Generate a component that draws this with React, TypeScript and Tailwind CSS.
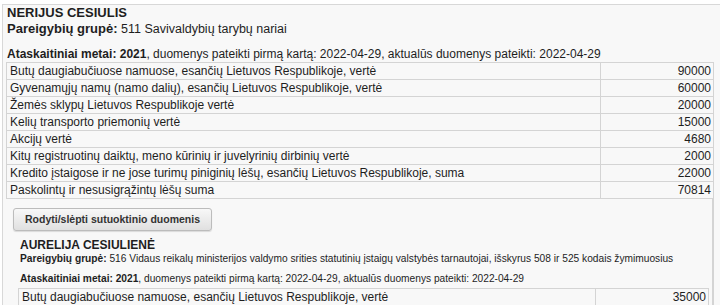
const rows: [string, string][] = [
  ["Butų daugiabučiuose namuose, esančių Lietuvos Respublikoje, vertė", "90000"],
  ["Gyvenamųjų namų (namo dalių), esančių Lietuvos Respublikoje, vertė", "60000"],
  ["Žemės sklypų Lietuvos Respublikoje vertė", "20000"],
  ["Kelių transporto priemonių vertė", "15000"],
  ["Akcijų vertė", "4680"],
  ["Kitų registruotinų daiktų, meno kūrinių ir juvelyrinių dirbinių vertė", "2000"],
  ["Kredito įstaigose ir ne jose turimų piniginių lėšų, esančių Lietuvos Respublikoje, suma", "22000"],
  ["Paskolintų ir nesusigrąžintų lėšų suma", "70814"],
];

const spouseRows: [string, string][] = [
  ["Butų daugiabučiuose namuose, esančių Lietuvos Respublikoje, vertė", "35000"],
];

const AssetTable = ({ data }: { data: [string, string][] }) => (
  <table className="w-full border-collapse text-[12px] leading-[16px]">
    <tbody>
      {data.map(([label, value]) => (
        <tr key={label} className="h-[17px]">
          <td className="border border-[#d4d4d4] py-0 pl-[3px] pr-[3px]">{label}</td>
          <td className="w-[113px] border border-[#d4d4d4] py-0 pl-[3px] pr-[2px] text-right">{value}</td>
        </tr>
      ))}
    </tbody>
  </table>
);

export default function App() {
  return (
    <div className="h-[305px] overflow-hidden bg-white pl-[2px] pt-[4px] font-['Liberation_Sans',Arial,sans-serif] text-[#1e1e1e]">
      <div className="h-full border-l border-t border-[#d8d8d8] bg-[#f8f8f8] pl-[3px]">
        <div className="w-[708px]">
          {/* Declarant */}
          <div className="pl-[1px]">
            <div className="text-[13px] font-bold leading-[16px]">NERIJUS CESIULIS</div>
            <div className="text-[12.5px] leading-[16px]">
              <b className="text-[13px]">Pareigybių grupė:</b> 511 Savivaldybių tarybų nariai
            </div>
            <div className="mt-[9px] text-[12px] leading-[16px]">
              <b>Ataskaitiniai metai: 2021</b>, duomenys pateikti pirmą kartą: 2022-04-29, aktualūs duomenys
              pateikti: 2022-04-29
            </div>
          </div>
          <AssetTable data={rows} />

          {/* Spouse */}
          <div className="border-r-2 border-[#d4d4d4] pb-[10px] pl-[12px] pr-[3px] pt-[7px]">
            <button className="-ml-[5px] h-[23px] w-[199px] whitespace-nowrap rounded-[3px] border border-[#bcbcbc] bg-gradient-to-b from-[#f8f8f8] to-[#e0e0e0] px-0 text-[10.5px] font-bold text-[#333] shadow-[0_1px_1px_rgba(0,0,0,0.12)]">
              Rodyti/slėpti sutuoktinio duomenis
            </button>
            <div className="mt-[7px] pl-[2px]">
              <div className="text-[12px] font-bold leading-[14px]">AURELIJA CESIULIENĖ</div>
              <div className="text-[10.2px] leading-[14px]">
                <b>Pareigybių grupė:</b> 516 Vidaus reikalų ministerijos valdymo srities statutinių įstaigų
                valstybės tarnautojai, išskyrus 508 ir 525 kodais žymimuosius
              </div>
              <div className="mt-[6px] text-[10.2px] leading-[14px]">
                <b>Ataskaitiniai metai: 2021</b>, duomenys pateikti pirmą kartą: 2022-04-29, aktualūs duomenys
                pateikti: 2022-04-29
              </div>
            </div>
            <div className="mt-[2px]">
              <AssetTable data={spouseRows} />
            </div>
          </div>
        </div>
      </div>
    </div>
  );
}
